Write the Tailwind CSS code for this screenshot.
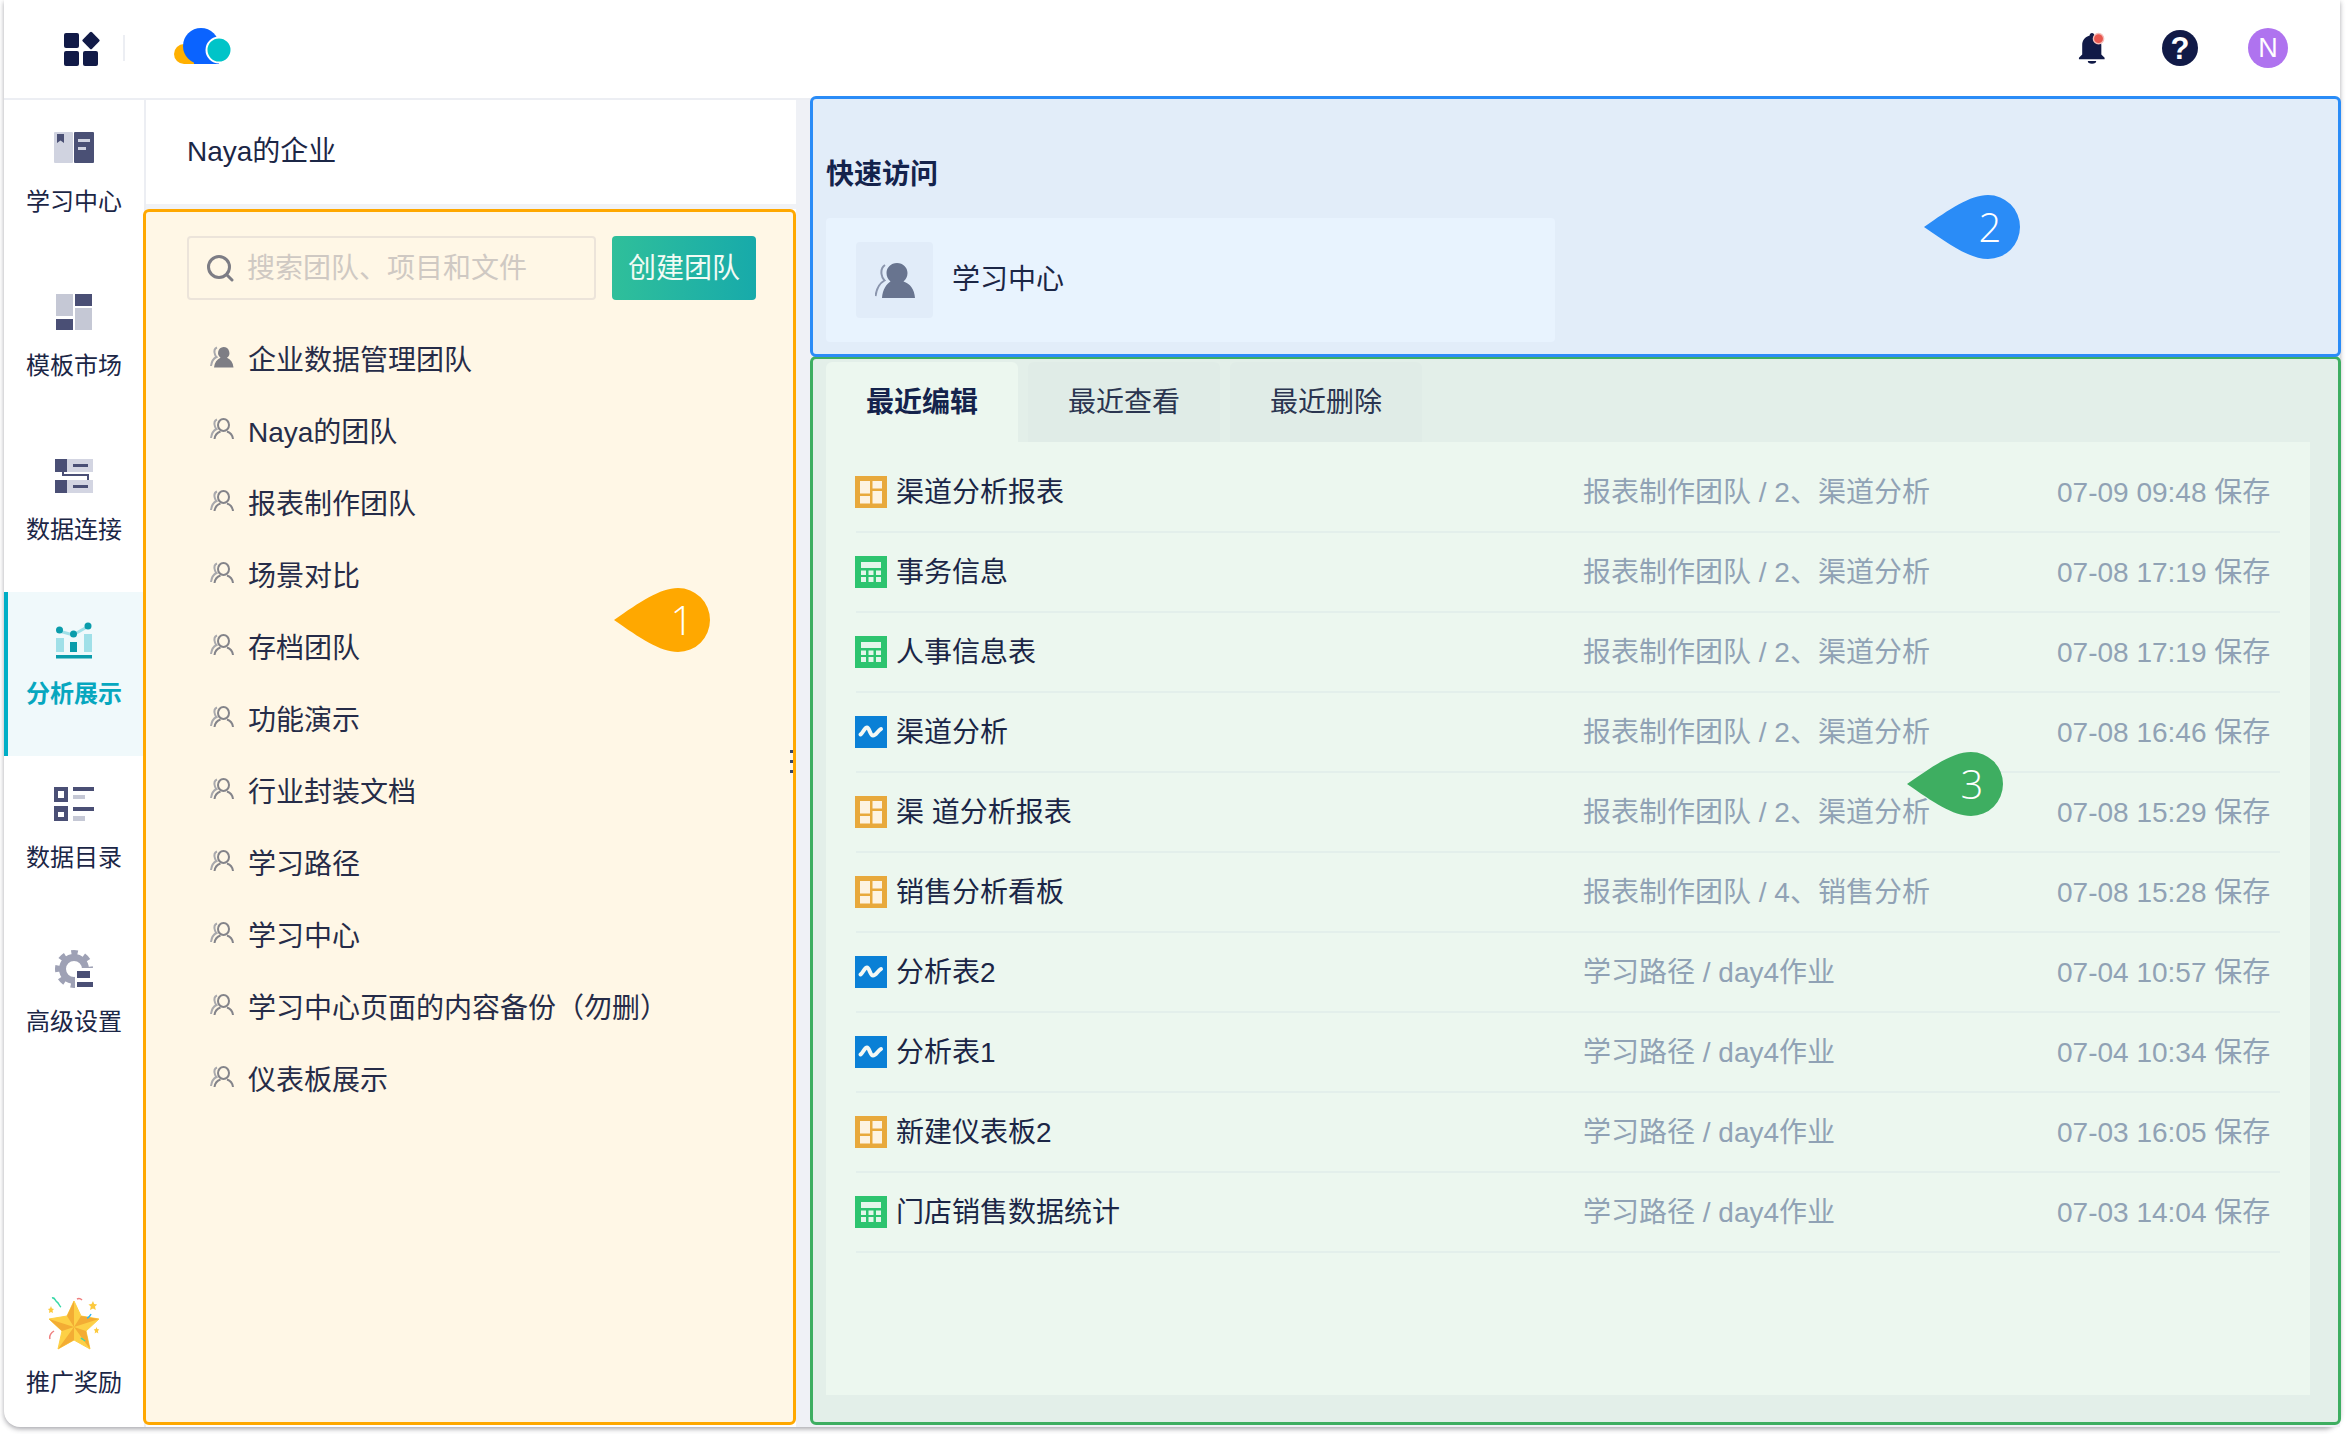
<!DOCTYPE html>
<html lang="zh-CN">
<head>
    <meta charset="UTF-8">
    <title>Naya的企业</title>
    <script src="https://cdn.jsdelivr.net/npm/@tailwindcss/browser@4"></script>
</head>
<body class="w-[2346px] h-[1434px] overflow-hidden bg-white text-[28px] text-[#1b2646] font-['Liberation_Sans','Noto_Sans_CJK_SC',sans-serif]">

<svg class="hidden">
    <defs>
        <symbol id="team" viewBox="0 0 24 22" fill="none" stroke-width="2">
            <ellipse cx="13.500" cy="7" rx="5.500" ry="6" stroke="#84848a"/>
            <path d="M4.500 21c.5-4 3-6.500 6-7.500M23 21c-.5-4-3-6.500-6-7.500" stroke="#84848a"/>
            <path d="M7 1.500c-2.500 1-3 4-2 7 .3 1 .8 2 1.500 2.500-3 1.500-5 5-5.500 9" stroke="#a9a9ad"/>
        </symbol>
        <symbol id="dash" viewBox="0 0 32 32">
            <rect width="32" height="32" fill="#e8a93c"/>
            <rect x="5" y="5" width="10" height="12.500" fill="#fdf3e2"/>
            <rect x="17.500" y="5" width="9.500" height="7.500" fill="#fdf3e2"/>
            <rect x="5" y="20" width="10" height="7.500" fill="#fdf3e2"/>
            <rect x="17.500" y="15" width="9.500" height="12.500" fill="#fdf3e2"/>
        </symbol>
        <symbol id="table" viewBox="0 0 32 32">
            <rect width="32" height="32" fill="#2dc46f"/>
            <rect x="6" y="6" width="20" height="6" fill="#e4f6ea"/>
            <g fill="#e4f6ea">
                <rect x="6" y="14.500" width="5" height="4.500"/><rect x="13.500" y="14.500" width="5" height="4.500"/><rect x="21" y="14.500" width="5" height="4.500"/>
                <rect x="6" y="21" width="5" height="5"/><rect x="13.500" y="21" width="5" height="5"/><rect x="21" y="21" width="5" height="5"/>
            </g>
        </symbol>
        <symbol id="chart" viewBox="0 0 32 32">
            <rect width="32" height="32" fill="#0a80d6"/>
            <path d="M5.500 18.500c2.500-1.500 4-7 6.500-7s3 8 6 8 4.500-4.500 8-6.500" fill="none" stroke="#f4f8f4" stroke-width="4" stroke-linecap="round"/>
        </symbol>
    </defs>
</svg>

<div class="ml-[4px] w-[2336px] h-[1427px] flex flex-col rounded-bl-[16px] rounded-br-[16px] bg-white shadow-[0_2px_5px_rgba(60,60,70,0.45)]">
    <!-- header -->
    <header class="h-[100px] shrink-0 flex items-center border-b-2 border-[#eceef3] pl-[60px] pr-[52px] pb-[2px]">
        <svg class="w-[36px] h-[35px]" viewBox="0 0 36 35" fill="#111a47">
            <rect x="0" y="2" width="15" height="15" rx="2"/>
            <rect x="0" y="20" width="15" height="15" rx="2"/>
            <rect x="19" y="20" width="15" height="15" rx="2"/>
            <rect x="20.500" y="3" width="13" height="13" rx="1.500" transform="rotate(45 27 9.500)"/>
        </svg>
        <div class="w-[2px] h-[26px] bg-[#eceef3] ml-[23px]"></div>
        <svg class="w-[58px] h-[36px] ml-[49px] -mt-[4px]" viewBox="0 0 58 36">
            <path d="M10 16a10 10 0 0 0 0 20h22V16z" fill="#ffb000"/>
            <circle cx="27" cy="18" r="18" fill="#0a63ff"/>
            <rect x="20" y="24" width="25" height="12" fill="#0a63ff"/>
            <circle cx="45" cy="22" r="12.500" fill="#00c4c8" stroke="#fff" stroke-width="2"/>
        </svg>
        <svg class="w-[28px] h-[34px] ml-auto" viewBox="0 0 30 34">
            <path d="M15 1c1.500 0 2.500 1 2.500 2.500C22.500 5 25 9 25 14v10l3.500 3.500v1.500H1v-1.500L4.500 24V14c0-5 2.500-9 8-10.500C12.500 2 13.500 1 15 1z" fill="#111a47"/>
            <path d="M10.500 31h9a4.500 3 0 0 1-9 0z" fill="#111a47"/>
            <circle cx="22" cy="7" r="5.500" fill="#e8574f" stroke="#f6bdb8" stroke-width="1.500"/>
        </svg>
        <div class="ml-[56px] w-[36px] h-[36px] rounded-full bg-[#111a47] text-white font-bold text-[31px] leading-none flex items-center justify-center">?</div>
        <div class="ml-[50px] w-[40px] h-[40px] rounded-full bg-[#af73ef] text-white text-[27px] leading-none flex items-center justify-center">N</div>
    </header>

    <div class="flex flex-1 min-h-0">
        <!-- sidebar -->
        <nav class="w-[142px] shrink-0 flex flex-col border-r-2 border-[#eceef3] text-[24px] leading-[32px] text-center">
            <a class="h-[164px] pt-[32px] flex flex-col items-center">
                <svg class="w-[40px] h-[32px] mb-[22px]" viewBox="0 0 40 32">
                    <rect x="0" y="0" width="19" height="31" rx="1" fill="#d0d3e0"/>
                    <rect x="20" y="0" width="20" height="31" rx="1" fill="#4a5075"/>
                    <path d="M3 2h7v9l-3.500-2.500L3 11z" fill="#4a5075"/>
                    <rect x="24" y="7" width="12" height="3" fill="#d0d3e0"/>
                    <rect x="24" y="15" width="8" height="3" fill="#d0d3e0"/>
                </svg>
                <span>学习中心</span>
            </a>
            <a class="h-[164px] pt-[30px] flex flex-col items-center">
                <svg class="w-[36px] h-[36px] mb-[20px]" viewBox="0 0 36 36">
                    <rect x="0" y="0" width="17" height="22" fill="#c5c8d5"/>
                    <rect x="19" y="0" width="17" height="12" fill="#4a4f75"/>
                    <rect x="0" y="25" width="17" height="11" fill="#4a4f75"/>
                    <rect x="19" y="14" width="17" height="22" fill="#c5c8d5"/>
                </svg>
                <span>模板市场</span>
            </a>
            <a class="h-[164px] pt-[31px] flex flex-col items-center">
                <svg class="w-[38px] h-[34px] mb-[21px]" viewBox="0 0 38 34">
                    <rect x="12" y="0" width="26" height="13" fill="#d3d5e2"/>
                    <rect x="12" y="21" width="26" height="13" fill="#d3d5e2"/>
                    <rect x="0" y="0" width="12" height="13" fill="#4a4f75"/>
                    <rect x="0" y="21" width="12" height="13" fill="#4a4f75"/>
                    <rect x="18" y="5" width="15" height="3" fill="#4a4f75"/>
                    <rect x="18" y="26" width="15" height="3" fill="#4a4f75"/>
                    <path d="M8 13v3h25v5" fill="none" stroke="#4a4f75" stroke-width="2"/>
                </svg>
                <span>数据连接</span>
            </a>
            <a class="h-[164px] pt-[30px] flex flex-col items-center border-l-4 border-[#00aec6] bg-[#f0f9fb] text-[#07a7bf] font-bold pr-[4px]">
                <svg class="w-[38px] h-[38px] mb-[18px]" viewBox="0 0 38 38">
                    <path d="M4 9l14 4 14-8" fill="none" stroke="#a0e0e8" stroke-width="3"/>
                    <rect x="1" y="16" width="8" height="14" fill="#a0e0e8"/>
                    <rect x="15" y="20" width="7" height="10" fill="#0a9cab"/>
                    <rect x="29" y="12" width="8" height="18" fill="#a0e0e8"/>
                    <rect x="1" y="33" width="36" height="3.500" fill="#0a9cab"/>
                    <circle cx="4.500" cy="8" r="3.500" fill="#0a9cab"/>
                    <circle cx="18.500" cy="12" r="3.500" fill="#0a9cab"/>
                    <circle cx="33" cy="4" r="3.500" fill="#0a9cab"/>
                </svg>
                <span>分析展示</span>
            </a>
            <a class="h-[164px] pt-[31px] flex flex-col items-center">
                <svg class="w-[40px] h-[34px] mb-[21px]" viewBox="0 0 40 34">
                    <path d="M0 0h14v15H0zM4 4v7h6V4z" fill="#4a4f75" fill-rule="evenodd"/>
                    <path d="M0 19h14v15H0zM4 25v5h6v-5z" fill="#4a4f75" fill-rule="evenodd"/>
                    <rect x="19" y="0" width="21" height="4" fill="#4a4f75"/>
                    <rect x="19" y="8" width="12" height="4" fill="#c5c8d5"/>
                    <rect x="19" y="20" width="21" height="4" fill="#4a4f75"/>
                    <rect x="19" y="29" width="12" height="5" fill="#c5c8d5"/>
                </svg>
                <span>数据目录</span>
            </a>
            <a class="h-[164px] pt-[30px] flex flex-col items-center">
                <svg class="w-[38px] h-[38px] mb-[18px]" viewBox="0 0 38 38">
                    <circle cx="19" cy="19" r="11.500" fill="none" stroke="#9ea1b5" stroke-width="7"/>
                    <circle cx="19" cy="19" r="16.500" fill="none" stroke="#9ea1b5" stroke-width="5" stroke-dasharray="6.500 6.460" stroke-dashoffset="3.250"/>
                    <rect x="20" y="18" width="18" height="20" fill="#fff"/>
                    <rect x="22" y="21" width="13" height="7" fill="#4a4f75"/>
                    <rect x="22" y="32" width="16" height="5" fill="#4a4f75"/>
                </svg>
                <span>高级设置</span>
            </a>
            <a class="mt-auto h-[131px] flex flex-col items-center">
                <svg class="w-[52px] h-[54px] mb-[17px]" viewBox="0 0 52 54">
                    <path d="M26 5l7 15 18 3-13 12 4 18-16-9-16 9 4-18L1 23l18-3z" fill="#fdd046" stroke="#fdd046" stroke-linejoin="round"/>
                    <path d="M26 31L26 5l-7 15zM26 31L51 23l-18-3zM26 31L42 53l-4-18zM26 31L10 53l16-9zM26 31L1 23l13 12z" fill="#f3ac34"/>
                    <path d="M4 2c3-1 3 3 5 4s2 4 4 5" fill="none" stroke="#39d8a8" stroke-width="1.500"/>
                    <path d="M29 3c2-1 4 0 5 1" fill="none" stroke="#ef7f7f" stroke-width="1.500"/>
                    <path d="M39 22c2 0 3-2 4-4" fill="none" stroke="#35b7f0" stroke-width="1.500"/>
                    <path d="M2 43c-1-3 1-6 4-8" fill="none" stroke="#ef7f7f" stroke-width="1.500"/>
                    <path d="M33 42c1 1 3 2 4 3" fill="none" stroke="#39d8a8" stroke-width="1.500"/>
                    <path d="M45 5l1.200 3 3 .5-2.200 2 .8 3.500-2.800-1.500-3 1.500.8-3.500-2.300-2 3-.5zM3 10l.9 2.500 2.100.5-1.500 1.500.5 2.500-2-1-2 1 .4-2.500L0 13l2-.5zM48.500 31l.8 2 2 .4-1.400 1.500.4 2.600-1.800-1.200-1.800 1.200.4-2.600-1.400-1.500 2-.4z" fill="#fcc93e"/>
                </svg>
                <span>推广奖励</span>
            </a>
        </nav>

        <!-- team list -->
        <section class="w-[650px] shrink-0 flex flex-col">
            <div class="h-[104px] shrink-0 flex items-center pl-[41px]">Naya的企业</div>
            <div class="h-[5px] shrink-0 bg-[#f0f2f6]"></div>
            <div class="relative flex-1 -ml-[3px] mb-[2px] border-[3px] border-[#ffa800] rounded-[6px] bg-[#fff7e6] text-[#262c48]">
                <div class="flex pl-[41px] pt-[24px]">
                    <div class="w-[409px] h-[64px] flex items-center border-2 border-[#ece4da] rounded-[4px] pl-[17px] pt-[2px] text-[#cfc9c3]">
                        <svg class="w-[28px] h-[28px] mr-[13px] -mt-[2px]" viewBox="0 0 28 28" fill="none" stroke="#7d7d85" stroke-width="3">
                            <circle cx="13" cy="13" r="10.500"/><path d="M21 21l5 5" stroke-linecap="round"/>
                        </svg>
                        搜索团队、项目和文件
                    </div>
                    <div class="ml-[16px] w-[144px] h-[64px] rounded-[4px] pt-[1px] bg-gradient-to-r from-[#2fbf9a] to-[#17aaaa] text-[#f2fbf4] flex items-center justify-center">创建团队</div>
                </div>
                <ul class="mt-[23px] pl-[64px]">
                    <li class="h-[72px] pt-[3px] flex items-center gap-[14px]">
                        <svg class="w-[24px] h-[22px] -mt-[8px]" viewBox="0 0 24 22">
                            <path d="M13.500 1a6 6 0 0 1 3.500 10.800c3.500 1.500 6 4.700 6.500 9.700H4c.5-5 3-8.200 6.500-9.700A6 6 0 0 1 13.500 1z" fill="#7e7e85"/>
                            <path d="M7 1.500c-2.500 1-3 4-2 7 .3 1 .8 2 1.500 2.500-3 1.500-5 5-5.500 9" fill="none" stroke="#a9a9ad" stroke-width="2"/>
                        </svg>
                        企业数据管理团队
                    </li>
                    <li class="h-[72px] pt-[3px] flex items-center gap-[14px]"><svg class="w-[24px] h-[22px] -mt-[8px]"><use href="#team"/></svg>Naya的团队</li>
                    <li class="h-[72px] pt-[3px] flex items-center gap-[14px]"><svg class="w-[24px] h-[22px] -mt-[8px]"><use href="#team"/></svg>报表制作团队</li>
                    <li class="h-[72px] pt-[3px] flex items-center gap-[14px]"><svg class="w-[24px] h-[22px] -mt-[8px]"><use href="#team"/></svg>场景对比</li>
                    <li class="h-[72px] pt-[3px] flex items-center gap-[14px]"><svg class="w-[24px] h-[22px] -mt-[8px]"><use href="#team"/></svg>存档团队</li>
                    <li class="h-[72px] pt-[3px] flex items-center gap-[14px]"><svg class="w-[24px] h-[22px] -mt-[8px]"><use href="#team"/></svg>功能演示</li>
                    <li class="h-[72px] pt-[3px] flex items-center gap-[14px]"><svg class="w-[24px] h-[22px] -mt-[8px]"><use href="#team"/></svg>行业封装文档</li>
                    <li class="h-[72px] pt-[3px] flex items-center gap-[14px]"><svg class="w-[24px] h-[22px] -mt-[8px]"><use href="#team"/></svg>学习路径</li>
                    <li class="h-[72px] pt-[3px] flex items-center gap-[14px]"><svg class="w-[24px] h-[22px] -mt-[8px]"><use href="#team"/></svg>学习中心</li>
                    <li class="h-[72px] pt-[3px] flex items-center gap-[14px]"><svg class="w-[24px] h-[22px] -mt-[8px]"><use href="#team"/></svg>学习中心页面的内容备份（勿删）</li>
                    <li class="h-[72px] pt-[3px] flex items-center gap-[14px]"><svg class="w-[24px] h-[22px] -mt-[8px]"><use href="#team"/></svg>仪表板展示</li>
                </ul>
                <!-- drag handle -->
                <div class="absolute left-[644px] top-[538px] flex flex-col gap-[7px]">
                    <i class="block w-[3px] h-[3px] bg-[#3a4a6a]"></i><i class="block w-[3px] h-[3px] bg-[#3a4a6a]"></i><i class="block w-[3px] h-[3px] bg-[#3a4a6a]"></i>
                </div>
                <!-- callout 1 -->
                <div class="absolute left-[468px] top-[376px]">
                    <svg class="w-[96px] h-[64px]" viewBox="0 0 96 64"><path d="M0 32C26 14 46 0 64 0a32 32 0 0 1 0 64C46 64 26 50 0 32z" fill="#ffa800"/></svg>
                    <span class="absolute left-[58px] top-0 w-[20px] h-[64px] flex items-center justify-center text-white text-[40px] font-['Open_Sans'] font-light">1</span>
                </div>
            </div>
        </section>

        <!-- right column -->
        <main class="flex-1 min-w-0 bg-[#eff1f6] pl-[14px] flex flex-col">
            <section class="relative z-10 h-[261px] shrink-0 -mt-[4px] -mr-[1px] border-[3px] border-[#2a8cf7] rounded-[6px] bg-[#e2edf9] pl-[13px]">
                <h2 class="mt-[58px] font-bold leading-[36px] text-[#14234c]">快速访问</h2>
                <div class="mt-[25px] w-[729px] h-[124px] rounded-[4px] bg-[#e8f3fe] flex items-center pl-[30px]">
                    <div class="w-[77px] h-[76px] rounded-[4px] bg-[#e1ecf9] flex items-center justify-center mr-[19px]">
                        <svg class="w-[40px] h-[35px]" viewBox="0 0 40 35">
                            <path d="M22 0c6 0 10.500 4.500 10.500 10 0 3.500-1.500 6.500-4 8.500C35 20.500 39.500 26.500 40 35H7c.5-8.500 5-14.500 8.500-16.500-2.500-2-4-5-4-8.500C11.500 4.500 16 0 22 0z" fill="#68748f"/>
                            <path d="M10 2C7 4 6 7 6.500 11c.3 2.500 1.500 5 3 6.500C5 20 1.500 26 .5 33" fill="none" stroke="#8a95ad" stroke-width="2"/>
                        </svg>
                    </div>
                    学习中心
                </div>
                <!-- callout 2 -->
                <div class="absolute left-[1111px] top-[96px]">
                    <svg class="w-[96px] h-[64px]" viewBox="0 0 96 64"><path d="M0 32C26 14 46 0 64 0a32 32 0 0 1 0 64C46 64 26 50 0 32z" fill="#2a8cf7"/></svg>
                    <span class="absolute left-[50px] top-0 w-[32px] h-[64px] flex items-center justify-center text-white text-[40px] font-['Open_Sans'] font-light">2</span>
                </div>
            </section>

            <section class="relative flex-1 min-h-0 -mt-[1px] -mr-[1px] mb-[2px] border-[3px] border-[#3eae61] rounded-[6px] bg-[#e3efe9] pl-[13px] pr-[28px] pt-[3px] pb-[27px] flex flex-col">
                <div class="flex gap-[10px] h-[80px] shrink-0 text-[#2a3550]">
                    <div class="w-[192px] rounded-t-[6px] pt-[2px] bg-[#ecf7ef] font-bold text-[#14234c] flex items-center justify-center">最近编辑</div>
                    <div class="w-[192px] rounded-t-[6px] pt-[2px] bg-[#e0ece7] flex items-center justify-center">最近查看</div>
                    <div class="w-[192px] rounded-t-[6px] pt-[2px] bg-[#e0ece7] flex items-center justify-center">最近删除</div>
                </div>
                <div class="flex-1 bg-[#ecf7ef] pt-[11px] pl-[30px] pr-[30px]">
                    <div class="h-[80px] pt-[2px] flex items-center border-b-2 border-[#e3efeb]">
                        <svg class="w-[32px] h-[32px] -ml-[1px] -mt-[2px] mr-[9px]"><use href="#dash"/></svg>
                        <span class="w-[687px]">渠道分析报表</span><span class="w-[474px] text-[#90a2b5]">报表制作团队 / 2、渠道分析</span><span class="text-[#90a2b5]">07-09 09:48 保存</span>
                    </div>
                    <div class="h-[80px] pt-[2px] flex items-center border-b-2 border-[#e3efeb]">
                        <svg class="w-[32px] h-[32px] -ml-[1px] -mt-[2px] mr-[9px]"><use href="#table"/></svg>
                        <span class="w-[687px]">事务信息</span><span class="w-[474px] text-[#90a2b5]">报表制作团队 / 2、渠道分析</span><span class="text-[#90a2b5]">07-08 17:19 保存</span>
                    </div>
                    <div class="h-[80px] pt-[2px] flex items-center border-b-2 border-[#e3efeb]">
                        <svg class="w-[32px] h-[32px] -ml-[1px] -mt-[2px] mr-[9px]"><use href="#table"/></svg>
                        <span class="w-[687px]">人事信息表</span><span class="w-[474px] text-[#90a2b5]">报表制作团队 / 2、渠道分析</span><span class="text-[#90a2b5]">07-08 17:19 保存</span>
                    </div>
                    <div class="h-[80px] pt-[2px] flex items-center border-b-2 border-[#e3efeb]">
                        <svg class="w-[32px] h-[32px] -ml-[1px] -mt-[2px] mr-[9px]"><use href="#chart"/></svg>
                        <span class="w-[687px]">渠道分析</span><span class="w-[474px] text-[#90a2b5]">报表制作团队 / 2、渠道分析</span><span class="text-[#90a2b5]">07-08 16:46 保存</span>
                    </div>
                    <div class="h-[80px] pt-[2px] flex items-center border-b-2 border-[#e3efeb]">
                        <svg class="w-[32px] h-[32px] -ml-[1px] -mt-[2px] mr-[9px]"><use href="#dash"/></svg>
                        <span class="w-[687px]">渠 道分析报表</span><span class="w-[474px] text-[#90a2b5]">报表制作团队 / 2、渠道分析</span><span class="text-[#90a2b5]">07-08 15:29 保存</span>
                    </div>
                    <div class="h-[80px] pt-[2px] flex items-center border-b-2 border-[#e3efeb]">
                        <svg class="w-[32px] h-[32px] -ml-[1px] -mt-[2px] mr-[9px]"><use href="#dash"/></svg>
                        <span class="w-[687px]">销售分析看板</span><span class="w-[474px] text-[#90a2b5]">报表制作团队 / 4、销售分析</span><span class="text-[#90a2b5]">07-08 15:28 保存</span>
                    </div>
                    <div class="h-[80px] pt-[2px] flex items-center border-b-2 border-[#e3efeb]">
                        <svg class="w-[32px] h-[32px] -ml-[1px] -mt-[2px] mr-[9px]"><use href="#chart"/></svg>
                        <span class="w-[687px]">分析表2</span><span class="w-[474px] text-[#90a2b5]">学习路径 / day4作业</span><span class="text-[#90a2b5]">07-04 10:57 保存</span>
                    </div>
                    <div class="h-[80px] pt-[2px] flex items-center border-b-2 border-[#e3efeb]">
                        <svg class="w-[32px] h-[32px] -ml-[1px] -mt-[2px] mr-[9px]"><use href="#chart"/></svg>
                        <span class="w-[687px]">分析表1</span><span class="w-[474px] text-[#90a2b5]">学习路径 / day4作业</span><span class="text-[#90a2b5]">07-04 10:34 保存</span>
                    </div>
                    <div class="h-[80px] pt-[2px] flex items-center border-b-2 border-[#e3efeb]">
                        <svg class="w-[32px] h-[32px] -ml-[1px] -mt-[2px] mr-[9px]"><use href="#dash"/></svg>
                        <span class="w-[687px]">新建仪表板2</span><span class="w-[474px] text-[#90a2b5]">学习路径 / day4作业</span><span class="text-[#90a2b5]">07-03 16:05 保存</span>
                    </div>
                    <div class="h-[80px] pt-[2px] flex items-center border-b-2 border-[#e3efeb]">
                        <svg class="w-[32px] h-[32px] -ml-[1px] -mt-[2px] mr-[9px]"><use href="#table"/></svg>
                        <span class="w-[687px]">门店销售数据统计</span><span class="w-[474px] text-[#90a2b5]">学习路径 / day4作业</span><span class="text-[#90a2b5]">07-03 14:04 保存</span>
                    </div>
                </div>
                <!-- callout 3 -->
                <div class="absolute left-[1094px] top-[393px]">
                    <svg class="w-[96px] h-[64px]" viewBox="0 0 96 64"><path d="M0 32C26 14 46 0 64 0a32 32 0 0 1 0 64C46 64 26 50 0 32z" fill="#3eae61"/></svg>
                    <span class="absolute left-[52px] top-0 w-[26px] h-[64px] flex items-center justify-center text-white text-[40px] font-['Open_Sans'] font-light">3</span>
                </div>
            </section>
        </main>
    </div>
</div>
</body>
</html>
